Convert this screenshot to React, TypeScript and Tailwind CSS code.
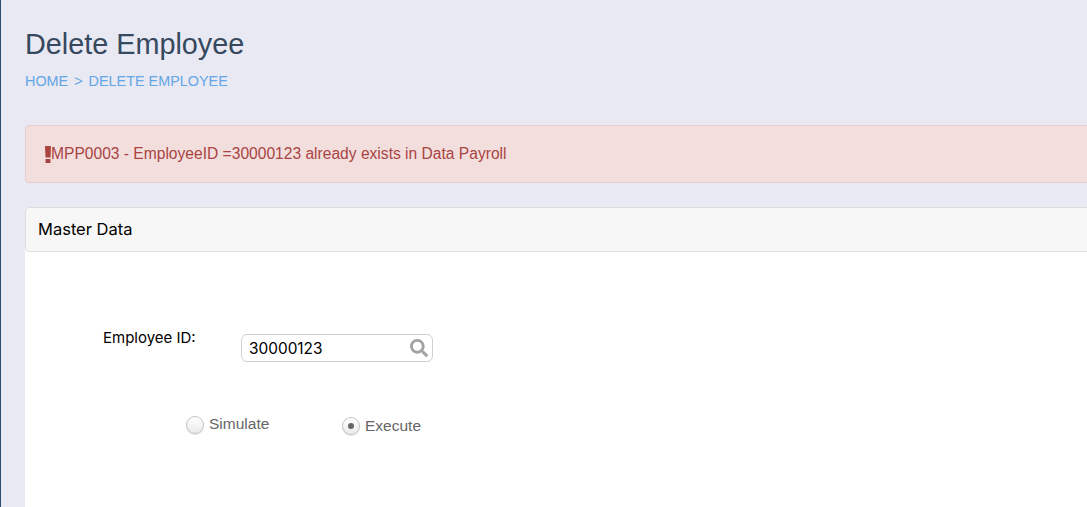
import React from "react";
import { FaSearch } from "react-icons/fa";

function Radio({ label, checked, textOffset }: { label: string; checked?: boolean; textOffset: string }) {
  return (
    <label className="flex items-center gap-[5px] text-[15.5px] leading-[20px] text-[#666666]">
      <span className="flex h-[18px] w-[18px] items-center justify-center rounded-full border border-[#c4c4c4] bg-gradient-to-b from-[#ffffff] to-[#ebebeb] shadow-[0_1px_1px_rgba(0,0,0,0.12)]">
        {checked && <span className="h-[6px] w-[6px] rounded-full bg-[#666666]" />}
      </span>
      <span className={textOffset}>{label}</span>
    </label>
  );
}

function App() {
  return (
    <div className="h-[507px] w-[1087px] overflow-hidden border-l border-[#2f4a6d] bg-[#e8e9f2] pl-[24px] font-['Liberation_Sans',sans-serif]">
      <div className="w-[1200px]">
        <h1 className="pt-[27px] text-[28.8px] leading-[35px] text-[#36495f]">Delete Employee</h1>
        <div className="mt-[9px] flex gap-[6px] text-[14.4px] leading-[20px] text-[#64a5e6]">
          <span>HOME</span>
          <span>&gt;</span>
          <span>DELETE EMPLOYEE</span>
        </div>

        <div className="mt-[34px] flex h-[58px] items-center rounded-[4px] border border-[#ecccd1] bg-[#f3dede] pl-[19px] text-[15.6px] text-[#a94442]">
          <svg width="6" height="17" viewBox="0 0 6 17" className="shrink-0" fill="#a94442">
            <path d="M0 0h6l-.5 11.500h-5z" />
            <rect x="0.500" y="13" width="5" height="4" />
          </svg>
          <span>MPP0003 - EmployeeID =30000123 already exists in Data Payroll</span>
        </div>

        <div className="mt-[24px] h-[300px] rounded-t-[4px] bg-white">
          <div className="flex h-[45px] items-center rounded-[4px] border border-[#dddddd] bg-[#f7f7f7] pl-[12px] font-['Inter',sans-serif] text-[16.5px] text-black">
            Master Data
          </div>

          <div className="flex items-start pl-[78px] pt-[76px] font-['Inter',sans-serif]">
            <span className="w-[138px] text-[15px] leading-[20px] text-black">Employee ID:</span>
            <div className="mt-[6px] flex h-[28px] w-[192px] items-center justify-between rounded-[6px] border border-[#d0d0d0] pl-[7px] pr-[4px] text-[15.4px] text-black">
              <span className="mt-[1px]">30000123</span>
              <FaSearch className="text-[#a3a3a3]" size={18} />
            </div>
          </div>

          <div className="flex pl-[161px] pt-[54px]">
            <div className="w-[156px]">
              <Radio label="Simulate" textOffset="-mt-[2px]" />
            </div>
            <Radio label="Execute" checked textOffset="mt-0" />
          </div>
        </div>
      </div>
    </div>
  );
}

export default App;
